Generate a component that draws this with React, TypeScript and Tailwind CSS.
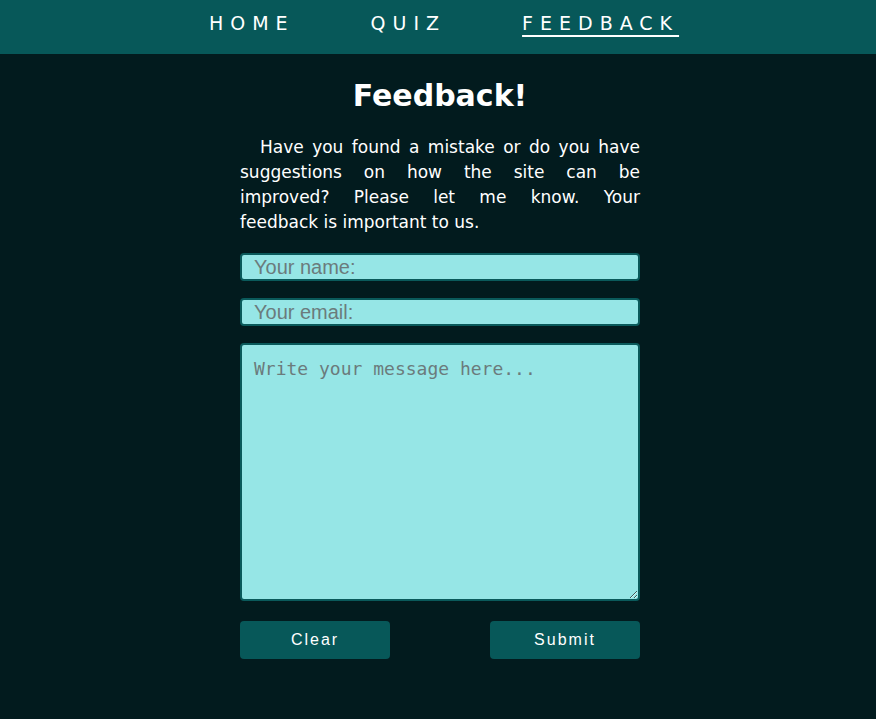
const lines = [
  "Have you found a mistake or do you have",
  "suggestions on how the site can be",
  "improved? Please let me know. Your",
];

export default function App() {
  return (
    <div className="min-h-[719px] bg-[#021b1e] pl-[4px] font-['DejaVu_Sans',sans-serif] text-white">
      <nav className="-ml-[4px] flex h-[54px] items-center justify-center gap-[76px] bg-[#075859] pb-[8px] pl-[12px] text-[19px] tracking-[7px]">
        <a className="cursor-pointer">HOME</a>
        <a className="cursor-pointer">QUIZ</a>
        <a className="cursor-pointer underline underline-offset-[5px] decoration-2">FEEDBACK</a>
      </nav>
      <main className="mx-auto w-[400px] pt-[22px]">
        <h1 className="text-center text-[30px] font-bold leading-[40px]">Feedback!</h1>
        <p className="mt-[19px] text-[17px] leading-[25px]">
          {lines.map((l, i) => (
            <span key={i} className={`block text-justify [text-align-last:justify] ${i === 0 ? "pl-[20px]" : ""}`}>
              {l}
            </span>
          ))}
          <span className="block">feedback is important to us.</span>
        </p>
        <form className="mt-[18px] flex flex-col gap-[17px]">
          <input
            type="text"
            placeholder="Your name:"
            className="h-[28px] w-full rounded-[4px] border-2 border-[#0a5a5b] bg-[#96e6e6] px-[12px] font-['Liberation_Sans',sans-serif] text-[20px] text-gray-800 placeholder:text-[#6b7b7c] outline-none"
          />
          <input
            type="email"
            placeholder="Your email:"
            className="h-[28px] w-full rounded-[4px] border-2 border-[#0a5a5b] bg-[#96e6e6] px-[12px] font-['Liberation_Sans',sans-serif] text-[20px] text-gray-800 placeholder:text-[#6b7b7c] outline-none"
          />
          <textarea
            placeholder="Write your message here..."
            className="h-[258px] w-full rounded-[4px] border-2 border-[#0a5a5b] bg-[#96e6e6] px-[12px] py-[12px] font-['DejaVu_Sans_Mono',monospace] text-[18px] leading-[24px] text-gray-800 placeholder:text-[#6b7b7c] outline-none"
          />
          <div className="mt-[3px] flex justify-between">
            <button type="reset" className="h-[38px] w-[150px] rounded-[4px] bg-[#075859] font-['Liberation_Sans',sans-serif] text-[16px] tracking-[2px] text-white">
              Clear
            </button>
            <button type="button" className="h-[38px] w-[150px] rounded-[4px] bg-[#075859] font-['Liberation_Sans',sans-serif] text-[16px] tracking-[2px] text-white">
              Submit
            </button>
          </div>
        </form>
      </main>
    </div>
  );
}
